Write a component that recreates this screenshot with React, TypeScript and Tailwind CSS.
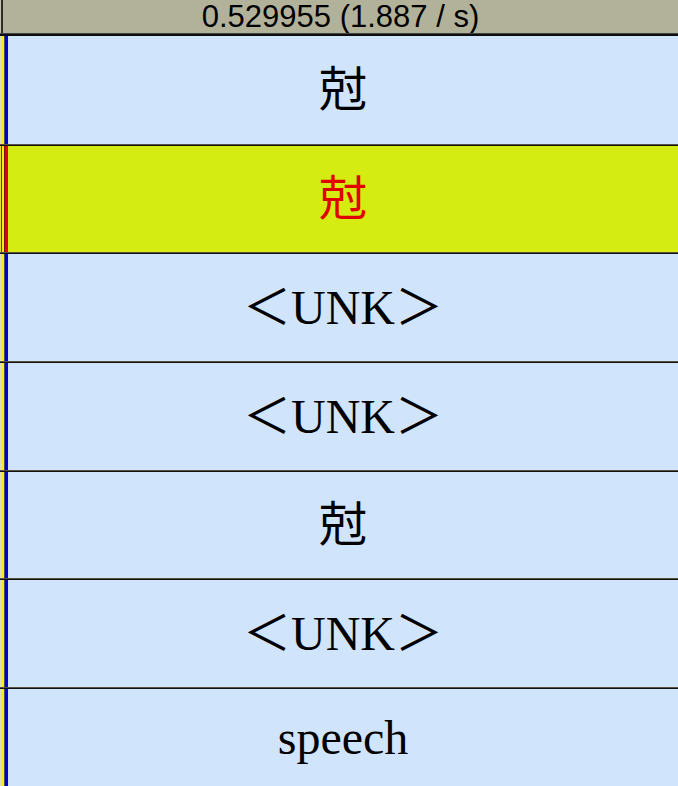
import React from "react";

type Row = { text: string; h: string; active?: boolean };

const rows: Row[] = [
  { text: "尅", h: "h-[108px]" },
  { text: "尅", h: "h-[106px]", active: true },
  { text: "＜UNK＞", h: "h-[107px]" },
  { text: "＜UNK＞", h: "h-[107px]" },
  { text: "尅", h: "h-[106px]" },
  { text: "＜UNK＞", h: "h-[107px]" },
  { text: "speech", h: "h-[97px]" },
];

export default function App() {
  return (
    <div className="w-[678px] h-[786px] overflow-hidden flex flex-col bg-[#d0e4fc]">
      <div className="flex h-[33px] shrink-0 bg-[#b2b29a]">
        <div className="w-[1px] shrink-0 bg-[#c4c4b4]" />
        <div className="w-[2px] shrink-0 bg-[#2e2e22]" />
        <div
          className="flex-1 flex items-center justify-center text-[31px] leading-[32px] text-black"
          style={{ fontFamily: '"Liberation Sans", Arial, sans-serif' }}
        >
          0.529955 (1.887 / s)
        </div>
      </div>
      <div className="h-[1px] shrink-0 bg-[#444]" />
      <div className="h-[2px] shrink-0 bg-[#0e0e0e]" />
      {rows.map((r, i) => (
        <React.Fragment key={i}>
          {i > 0 && (
            <div className="shrink-0 flex flex-col">
              <div className="h-[1px] bg-[#5a5040]" />
              <div className="h-[1px] bg-[#111]" />
            </div>
          )}
          <div className={`flex shrink-0 ${r.h} ${r.active ? "bg-[#d4ec12]" : "bg-[#d0e4fc]"}`}>
            <div className={`w-[1px] shrink-0 ${r.active ? "bg-[#e8e030]" : "bg-[#d8e0c0]"}`} />
            {r.active ? (
              <>
                <div className="w-[1px] shrink-0 bg-[#e00000]" />
                <div className="w-[2px] shrink-0 bg-[#f2ec18]" />
                <div className="w-[1px] shrink-0 bg-[#7a1010]" />
                <div className="w-[3px] shrink-0 bg-[#e00000]" />
              </>
            ) : (
              <>
                <div className="w-[3px] shrink-0 bg-[#f2f21a]" />
                <div className="w-[1px] shrink-0 bg-[#4a4a60]" />
                <div className="w-[3px] shrink-0 bg-[#0000d2]" />
              </>
            )}
            <div
              className={`flex-1 flex items-center justify-center text-[48px] leading-none ${
                r.active ? "text-[#e00000]" : "text-black"
              }`}
              style={{
                fontFamily: '"Liberation Serif", "Noto Sans CJK SC", serif',
              }}
            >
              {r.text}
            </div>
          </div>
        </React.Fragment>
      ))}
    </div>
  );
}
